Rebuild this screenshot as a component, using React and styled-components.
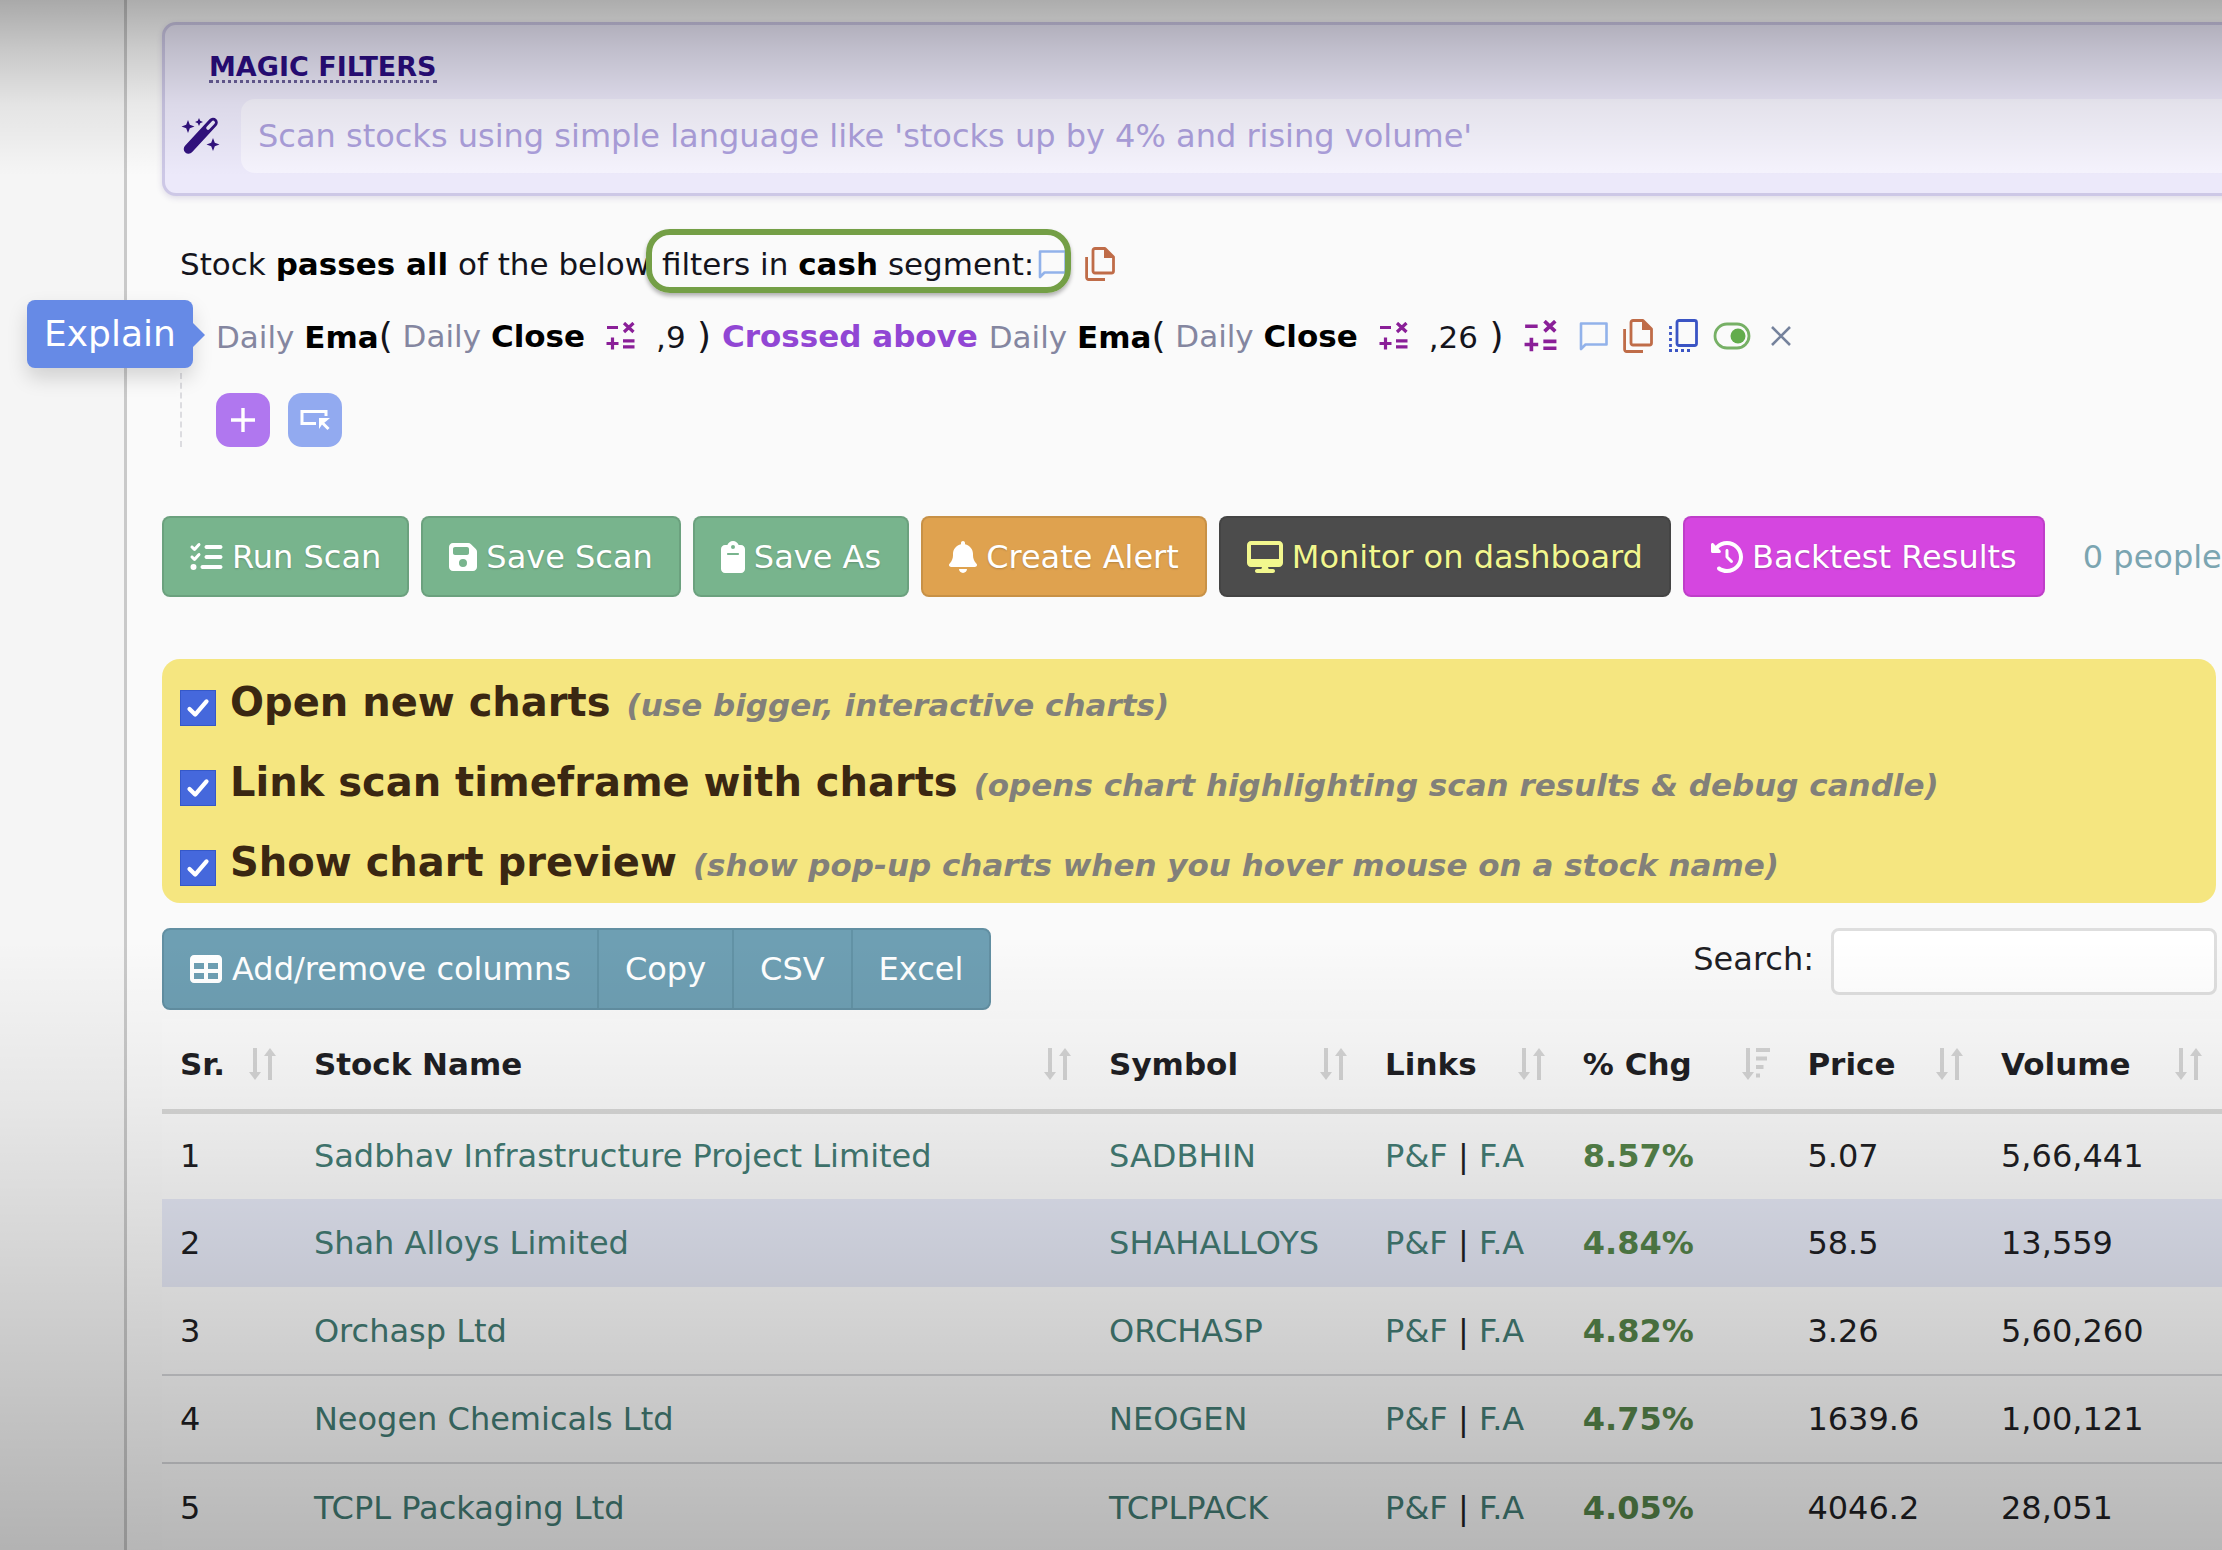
import React from 'react';
import styled, { createGlobalStyle, css } from 'styled-components';
/* Icons */
import {
   FaListCheck,
   FaFloppyDisk,
   FaClipboard,
   FaBell,
   FaDesktop,
   FaClockRotateLeft,
   FaTable,
} from 'react-icons/fa6';

const GlobalStyle = createGlobalStyle`
   *, *::before, *::after {
      box-sizing: border-box;
   }
   body {
      margin: 0;
      background: #fafafa;
      color: #1f1f24;
      font-family: 'DejaVu Sans', Verdana, sans-serif;
      font-size: 32px;
      line-height: 40px;
      overflow: hidden;
   }
   button, input {
      font: inherit;
   }
`;

/* Layout */
const Page = styled.div`
   position: relative;
   display: grid;
   grid-template-columns: 127px minmax(0, 1fr);
   height: 100vh;
   min-height: 100%;
   overflow: hidden;
`;

const Sidebar = styled.aside`
   border-right: 3px solid #c9c9c9;
   background: #f5f5f5;
`;

const Main = styled.main`
   display: flex;
   flex-direction: column;
   padding: 22px 0 0 35px;
   white-space: nowrap;
`;

/* Darkens the top and the bottom edge of the window */
const Shade = styled.div`
   position: absolute;
   inset: 0;
   pointer-events: none;
   background:
      linear-gradient(to bottom, rgba(0, 0, 0, .31), rgba(0, 0, 0, .19) 48px, rgba(0, 0, 0, .07) 104px, transparent 176px),
      linear-gradient(to top, rgba(0, 0, 0, .27), rgba(0, 0, 0, .2) 150px, rgba(0, 0, 0, .13) 300px, rgba(0, 0, 0, .06) 450px, transparent 610px);
`;

/* Magic filters */
const MagicPanel = styled.section`
   height: 174px;
   margin-right: -20px;
   padding: 20px 0 0 16px;
   border: 3px solid #cdc8e6;
   border-radius: 14px;
   background: #ece9fa;
   box-shadow: 0 2px 6px rgba(60, 40, 120, .15);
`;

const MagicTitle = styled.label`
   display: inline-block;
   margin-left: 28px;
   border-bottom: 3px dotted #6a5f9a;
   font-size: 27px;
   font-weight: bold;
   line-height: 26px;
   color: #2b0d82;
`;

const MagicRow = styled.div`
   display: flex;
   align-items: center;
   gap: 20px;
   margin-top: 14px;
`;

const MagicInput = styled.input`
   flex: 1;
   height: 74px;
   padding: 0 17px;
   border: 0;
   border-radius: 14px;
   background: #f5f3fd;
   color: #2b0d82;
   &::placeholder {
      color: #aca0dc;
      opacity: 1;
   }
`;

/* Filter sentence */
const Filters = styled.section`
   display: flex;
   flex-direction: column;
   margin-top: 48px;
   padding-left: 18px;
   color: #14141c;
`;

const FilterLine = styled.div`
   display: flex;
   align-items: center;
   height: 40px;
   font-size: 31px;
   white-space: pre;
   b {
      color: #000;
   }
`;

const SegmentMark = styled.span`
   display: flex;
   align-items: center;
   gap: 4px;
   margin-left: 2px;
   position: relative;
   &::after {
      content: '';
      position: absolute;
      inset: -15px -4px -9px -16px;
      border: 6px solid #749f46;
      border-radius: 24px;
      box-shadow: 0 3px 4px rgba(0, 0, 0, .3);
   }
`;

const Rule = styled(FilterLine)`
   position: relative;
   margin-top: 32px;
   padding-left: 36px;
`;

const Period = styled.span`
   color: #8486a0;
`;

const Crossed = styled.b`
   && {
      color: #9146d4;
   }
`;

const Paren = styled.span`
   font-size: 36px;
`;

const IconButton = styled.button`
   display: inline-flex;
   margin: ${({ $margin }) => $margin || '0'};
   padding: 0;
   border: 0;
   background: none;
   cursor: pointer;
`;

const Explain = styled.span`
   position: absolute;
   left: -153px;
   top: -16px;
   padding: 0 17px;
   border-radius: 8px;
   font-size: 36px;
   line-height: 68px;
   background: #668ae6;
   color: #fff;
   box-shadow: 0 10px 20px rgba(0, 0, 0, .15);
   &::after {
      content: '';
      position: absolute;
      left: 100%;
      top: 23px;
      border: 12px solid transparent;
      border-left-color: #668ae6;
      border-right-width: 0;
   }
`;

const AddRow = styled.div`
   display: flex;
   gap: 18px;
   margin-top: 17px;
   padding: 20px 0 0 34px;
   border-left: 2px dashed #dcdce0;
`;

const SquareButton = styled.button`
   display: flex;
   align-items: center;
   justify-content: center;
   width: 54px;
   height: 54px;
   padding: 0;
   border: 0;
   border-radius: 14px;
   background: ${({ $bg }) => $bg};
   color: #fff;
   cursor: pointer;
`;

/* Scan actions */
const Actions = styled.div`
   display: flex;
   align-items: center;
   gap: 12px;
   margin-top: 69px;
`;

const ActionButton = styled.button`
   display: flex;
   align-items: center;
   gap: 9px;
   height: 81px;
   padding: 0 26px;
   border: 2px solid rgba(0, 0, 0, .1);
   border-radius: 8px;
   background: ${({ $bg }) => $bg};
   color: ${({ $color }) => $color || '#fff'};
   text-shadow: 0 1px 2px rgba(0, 0, 0, .2);
   cursor: pointer;
   svg {
      flex: none;
      width: ${({ $icon }) => $icon}px;
      height: 32px;
   }
`;

const People = styled.a`
   margin-left: 26px;
   color: #7ba5b1;
   text-decoration: none;
`;

/* Chart options */
const Options = styled.section`
   display: flex;
   flex-direction: column;
   gap: 33px;
   margin: 62px 6px 0 0;
   padding: 20px 18px 17px;
   border-radius: 18px;
   background: #f5e680;
`;

const Option = styled.label`
   display: flex;
   align-items: baseline;
   height: 47px;
   font-size: 40px;
   font-weight: bold;
   line-height: 46px;
   color: #3a2712;
   em {
      margin-left: 16px;
      font-size: 31px;
      color: #82807a;
   }
`;

const Tick = styled.input`
   appearance: none;
   align-self: flex-end;
   width: 36px;
   height: 36px;
   margin: 0 14px 0 0;
   border: 1px solid #3558c8;
   background: #4568dc;
   &:checked {
      background: #4568dc url("data:image/svg+xml,%3Csvg xmlns='http://www.w3.org/2000/svg' viewBox='0 0 36 36'%3E%3Cpath d='M9 19l6 6 12-14' fill='none' stroke='white' stroke-width='4.5' stroke-linecap='round' stroke-linejoin='round'/%3E%3C/svg%3E") center / contain no-repeat;
   }
`;

/* Table tools */
const Tools = styled.div`
   display: flex;
   justify-content: space-between;
   margin: 25px 5px 0 0;
`;

const ButtonGroup = styled.div`
   display: flex;
   border: 2px solid #628fa2;
   border-radius: 8px;
   background: #6e9fb3;
   overflow: hidden;
`;

const GroupButton = styled.button`
   display: flex;
   align-items: center;
   gap: 10px;
   height: 78px;
   padding: 0 26px;
   border: 0;
   background: none;
   color: #fff;
   cursor: pointer;
   & + & {
      border-left: 2px solid #6292a5;
   }
`;

const Search = styled.label`
   display: flex;
   gap: 17px;
   line-height: 62px;
`;

const SearchInput = styled.input`
   width: 386px;
   height: 67px;
   padding: 0 16px;
   border: 3px solid #dedede;
   border-radius: 8px;
   background: #fff;
`;

/* Results */
const Table = styled.table`
   width: 100%;
   margin-top: 9px;
   border-collapse: collapse;
   table-layout: fixed;
   background: rgba(255, 255, 255, .2);
`;

const Th = styled.th`
   width: ${({ $width }) => $width};
   height: 92px;
   padding: 0 18px;
   border-bottom: 5px solid #d9d9d8;
   text-align: left;
   font-size: 31px;
   > div {
      display: flex;
      align-items: center;
      justify-content: space-between;
   }
`;

const Row = styled.tr`
   background: ${({ $active }) => ($active ? '#e6e9f6' : 'none')};
   & + & td {
      border-top: 2px solid #d4d5d8;
   }
`;

const Td = styled.td`
   height: 88px;
   padding: 0 18px;
   ${({ $gain }) => $gain && css`
      font-weight: bold;
      color: #55844a;
   `}
`;

const Link = styled.a`
   color: #437c74;
   text-decoration: none;
`;

/* Drawn icons */
const WandIcon = () => (
   <svg width="40" height="38" viewBox="0 0 40 38" fill="#32127f">
      <path d="M7.500 32 32 5.500" stroke="#32127f" strokeWidth="9.500" strokeLinecap="round" />
      <path d="M27 11 32.200 5.500" stroke="#ece9fa" strokeWidth="3.600" strokeLinecap="round" />
      <path d="M7 3l1.800 4.700L13.500 9.500l-4.700 1.800L7 16l-1.800-4.700L.5 9.500l4.700-1.800zM18 1l1.200 2.800L22 5l-2.800 1.200L18 9l-1.200-2.800L14 5l2.800-1.200zM32 21l1.800 4.700 4.700 1.800-4.700 1.800L32 34l-1.800-4.700-4.700-1.800 4.700-1.800z" />
   </svg>
);

const MathIcon = ({ size = 29 }) => (
   <svg width={size} height={size} viewBox="0 0 29 29" fill="none" stroke="#8a1f98" strokeWidth="3.200">
      <path d="M1 5.500h11M.5 21.500h12M6.500 15.500v12M17 18.800h11.500M17 24.800h11.500M18 1l9.500 9M27.500 1l-9.500 9" />
   </svg>
);

const CommentIcon = () => (
   <svg width="29" height="30" viewBox="0 0 29 30" fill="none" stroke="#92b2ea" strokeWidth="2.600">
      <path d="M2 28V2.500h25.500v21H6.500z" strokeLinejoin="round" />
   </svg>
);

const CopyIcon = () => (
   <svg width="30" height="34" viewBox="0 0 30 34" fill="none" stroke="#bf6c48" strokeWidth="2.800" strokeLinejoin="round">
      <path d="M10 1.500h10l8.500 8.500v14a2 2 0 0 1-2 2H10a2 2 0 0 1-2-2V3.500a2 2 0 0 1 2-2z" />
      <path d="M1.600 10v20.500a2 2 0 0 0 2 2H20" />
      <path d="M19 1.500V11h9.500z" fill="#bf6c48" stroke="none" />
   </svg>
);

const DuplicateIcon = () => (
   <svg width="30" height="34" viewBox="0 0 30 34" fill="none" stroke="#3a54c4" strokeWidth="2.800">
      <rect x="9" y="1.500" width="19.500" height="25" rx="2" />
      <path d="M2.500 7v26M1 31.500h21" strokeDasharray="3 3" />
   </svg>
);

const ToggleIcon = () => (
   <svg width="38" height="28" viewBox="0 0 38 28" fill="none" stroke="#76b065" strokeWidth="2.800">
      <rect x="2" y="2" width="34" height="24" rx="12" />
      <circle cx="25" cy="14" r="7.500" fill="#62ac4c" stroke="none" />
   </svg>
);

const CloseIcon = () => (
   <svg width="20" height="20" viewBox="0 0 20 20" fill="none" stroke="#75829c" strokeWidth="2.600">
      <path d="M1 1l18 18M19 1L1 19" />
   </svg>
);

const PlusIcon = () => (
   <svg width="24" height="24" viewBox="0 0 24 24" fill="none" stroke="currentColor" strokeWidth="3.400">
      <path d="M12 0v24M0 12h24" />
   </svg>
);

const GroupIcon = () => (
   <svg width="32" height="22" viewBox="0 0 32 22" fill="none" stroke="currentColor" strokeWidth="3">
      <path d="M27 7V2.500H3v12h14" />
      <path d="M29.500 20 23 13.500" />
      <path d="M20 9h11l-3.500 3-4.500 3.500L20 20z" fill="currentColor" stroke="none" />
   </svg>
);

const SortIcon = ({ descending }) => (
   <svg width="30" height="34" viewBox="0 0 30 34" fill="none" stroke="#d4d4d4" strokeWidth="4">
      <path d="M7 1v25" />
      <path d="M1 25h12l-6 8z" fill="#d4d4d4" stroke="none" />
      {descending
         ? <path d="M15 3h14M15 11.500h11M15 20h7.500M15 28.500h4" />
         : (
            <>
               <path d="M22 33V8" />
               <path d="M16 9h12l-6-8z" fill="#d4d4d4" stroke="none" />
            </>
         )}
   </svg>
);

const actions = [
   { label: 'Run Scan', icon: FaListCheck, size: 33, bg: '#78b48d' },
   { label: 'Save Scan', icon: FaFloppyDisk, size: 28, bg: '#78b48d' },
   { label: 'Save As', icon: FaClipboard, size: 24, bg: '#78b48d' },
   { label: 'Create Alert', icon: FaBell, size: 28, bg: '#dfa24f' },
   { label: 'Monitor on dashboard', icon: FaDesktop, size: 36, bg: '#4c4c4c', color: '#f2f78e' },
   { label: 'Backtest Results', icon: FaClockRotateLeft, size: 32, bg: '#d546e0' },
];

const options = [
   { label: 'Open new charts', hint: '(use bigger, interactive charts)' },
   { label: 'Link scan timeframe with charts', hint: '(opens chart highlighting scan results & debug candle)' },
   { label: 'Show chart preview', hint: '(show pop-up charts when you hover mouse on a stock name)' },
];

const columns = [
   { label: 'Sr.', width: '6.5%' },
   { label: 'Stock Name', width: '38.6%' },
   { label: 'Symbol', width: '13.4%' },
   { label: 'Links', width: '9.6%' },
   { label: '% Chg', width: '10.9%', descending: true },
   { label: 'Price', width: '9.4%' },
   { label: 'Volume', width: '11.6%' },
];

const stocks = [
   { name: 'Sadbhav Infrastructure Project Limited', symbol: 'SADBHIN', change: '8.57%', price: '5.07', volume: '5,66,441' },
   { name: 'Shah Alloys Limited', symbol: 'SHAHALLOYS', change: '4.84%', price: '58.5', volume: '13,559' },
   { name: 'Orchasp Ltd', symbol: 'ORCHASP', change: '4.82%', price: '3.26', volume: '5,60,260' },
   { name: 'Neogen Chemicals Ltd', symbol: 'NEOGEN', change: '4.75%', price: '1639.6', volume: '1,00,121' },
   { name: 'TCPL Packaging Ltd', symbol: 'TCPLPACK', change: '4.05%', price: '4046.2', volume: '28,051' },
];

const Measure = ({ length }) => (
   <>
      <span><Period>Daily</Period> <b>Ema</b><Paren>(</Paren></span>
      <span><Period> Daily</Period> <b>Close</b></span>
      <IconButton $margin="0 21px" aria-label="Add operation"><MathIcon /></IconButton>
      <span>,{length}<Paren> )</Paren></span>
   </>
);

const FilterSection = () => (
   <Filters>
      <FilterLine>
         <span>Stock <b>passes all</b> of the below </span>
         <SegmentMark>
            <span>filters in <b>cash</b> segment:</span>
            <IconButton aria-label="Comment"><CommentIcon /></IconButton>
         </SegmentMark>
         <IconButton $margin="0 0 0 18px" aria-label="Copy filters"><CopyIcon /></IconButton>
      </FilterLine>
      <Rule>
         <Explain role="tooltip">Explain</Explain>
         <Measure length="9" />
         <Crossed> Crossed above </Crossed>
         <Measure length="26" />
         <IconButton $margin="0 0 0 20px" aria-label="Add operation"><MathIcon size={33} /></IconButton>
         <IconButton $margin="0 0 0 22px" aria-label="Comment"><CommentIcon /></IconButton>
         <IconButton $margin="0 0 0 15px" aria-label="Copy"><CopyIcon /></IconButton>
         <IconButton $margin="0 0 0 15px" aria-label="Duplicate"><DuplicateIcon /></IconButton>
         <IconButton $margin="0 0 0 15px" aria-label="Enable"><ToggleIcon /></IconButton>
         <IconButton $margin="0 0 0 20px" aria-label="Remove"><CloseIcon /></IconButton>
      </Rule>
      <AddRow>
         <SquareButton $bg="#b077ef" aria-label="Add filter"><PlusIcon /></SquareButton>
         <SquareButton $bg="#92aaf0" aria-label="Add group"><GroupIcon /></SquareButton>
      </AddRow>
   </Filters>
);

const Results = () => (
   <Table>
      <thead>
         <tr>
            {columns.map(({ label, width, descending }) => (
               <Th key={label} $width={width}>
                  <div>
                     {label}
                     <SortIcon descending={descending} />
                  </div>
               </Th>
            ))}
         </tr>
      </thead>
      <tbody>
         {stocks.map((stock, index) => (
            <Row key={stock.symbol} $active={index === 1}>
               <Td>{index + 1}</Td>
               <Td><Link href="#stock">{stock.name}</Link></Td>
               <Td><Link href="#symbol">{stock.symbol}</Link></Td>
               <Td><Link href="#pf">P&amp;F</Link> | <Link href="#fa">F.A</Link></Td>
               <Td $gain>{stock.change}</Td>
               <Td>{stock.price}</Td>
               <Td>{stock.volume}</Td>
            </Row>
         ))}
      </tbody>
   </Table>
);

const App = () => (
   <>
      <GlobalStyle />
      <Page>
         <Sidebar />
         <Main>
            <MagicPanel>
               <MagicTitle htmlFor="magic">MAGIC FILTERS</MagicTitle>
               <MagicRow>
                  <WandIcon />
                  <MagicInput
                     id="magic"
                     placeholder="Scan stocks using simple language like 'stocks up by 4% and rising volume'"
                  />
               </MagicRow>
            </MagicPanel>
            <FilterSection />
            <Actions>
               {actions.map(({ label, icon: Icon, size, bg, color }) => (
                  <ActionButton key={label} $bg={bg} $color={color} $icon={size}>
                     <Icon />
                     {label}
                  </ActionButton>
               ))}
               <People href="#people">0 people</People>
            </Actions>
            <Options>
               {options.map(({ label, hint }) => (
                  <Option key={label}>
                     <Tick type="checkbox" defaultChecked />
                     {label}
                     <em>{hint}</em>
                  </Option>
               ))}
            </Options>
            <Tools>
               <ButtonGroup>
                  <GroupButton><FaTable />Add/remove columns</GroupButton>
                  <GroupButton>Copy</GroupButton>
                  <GroupButton>CSV</GroupButton>
                  <GroupButton>Excel</GroupButton>
               </ButtonGroup>
               <Search>
                  Search:
                  <SearchInput type="search" />
               </Search>
            </Tools>
            <Results />
         </Main>
         <Shade />
      </Page>
   </>
);

export default App;
